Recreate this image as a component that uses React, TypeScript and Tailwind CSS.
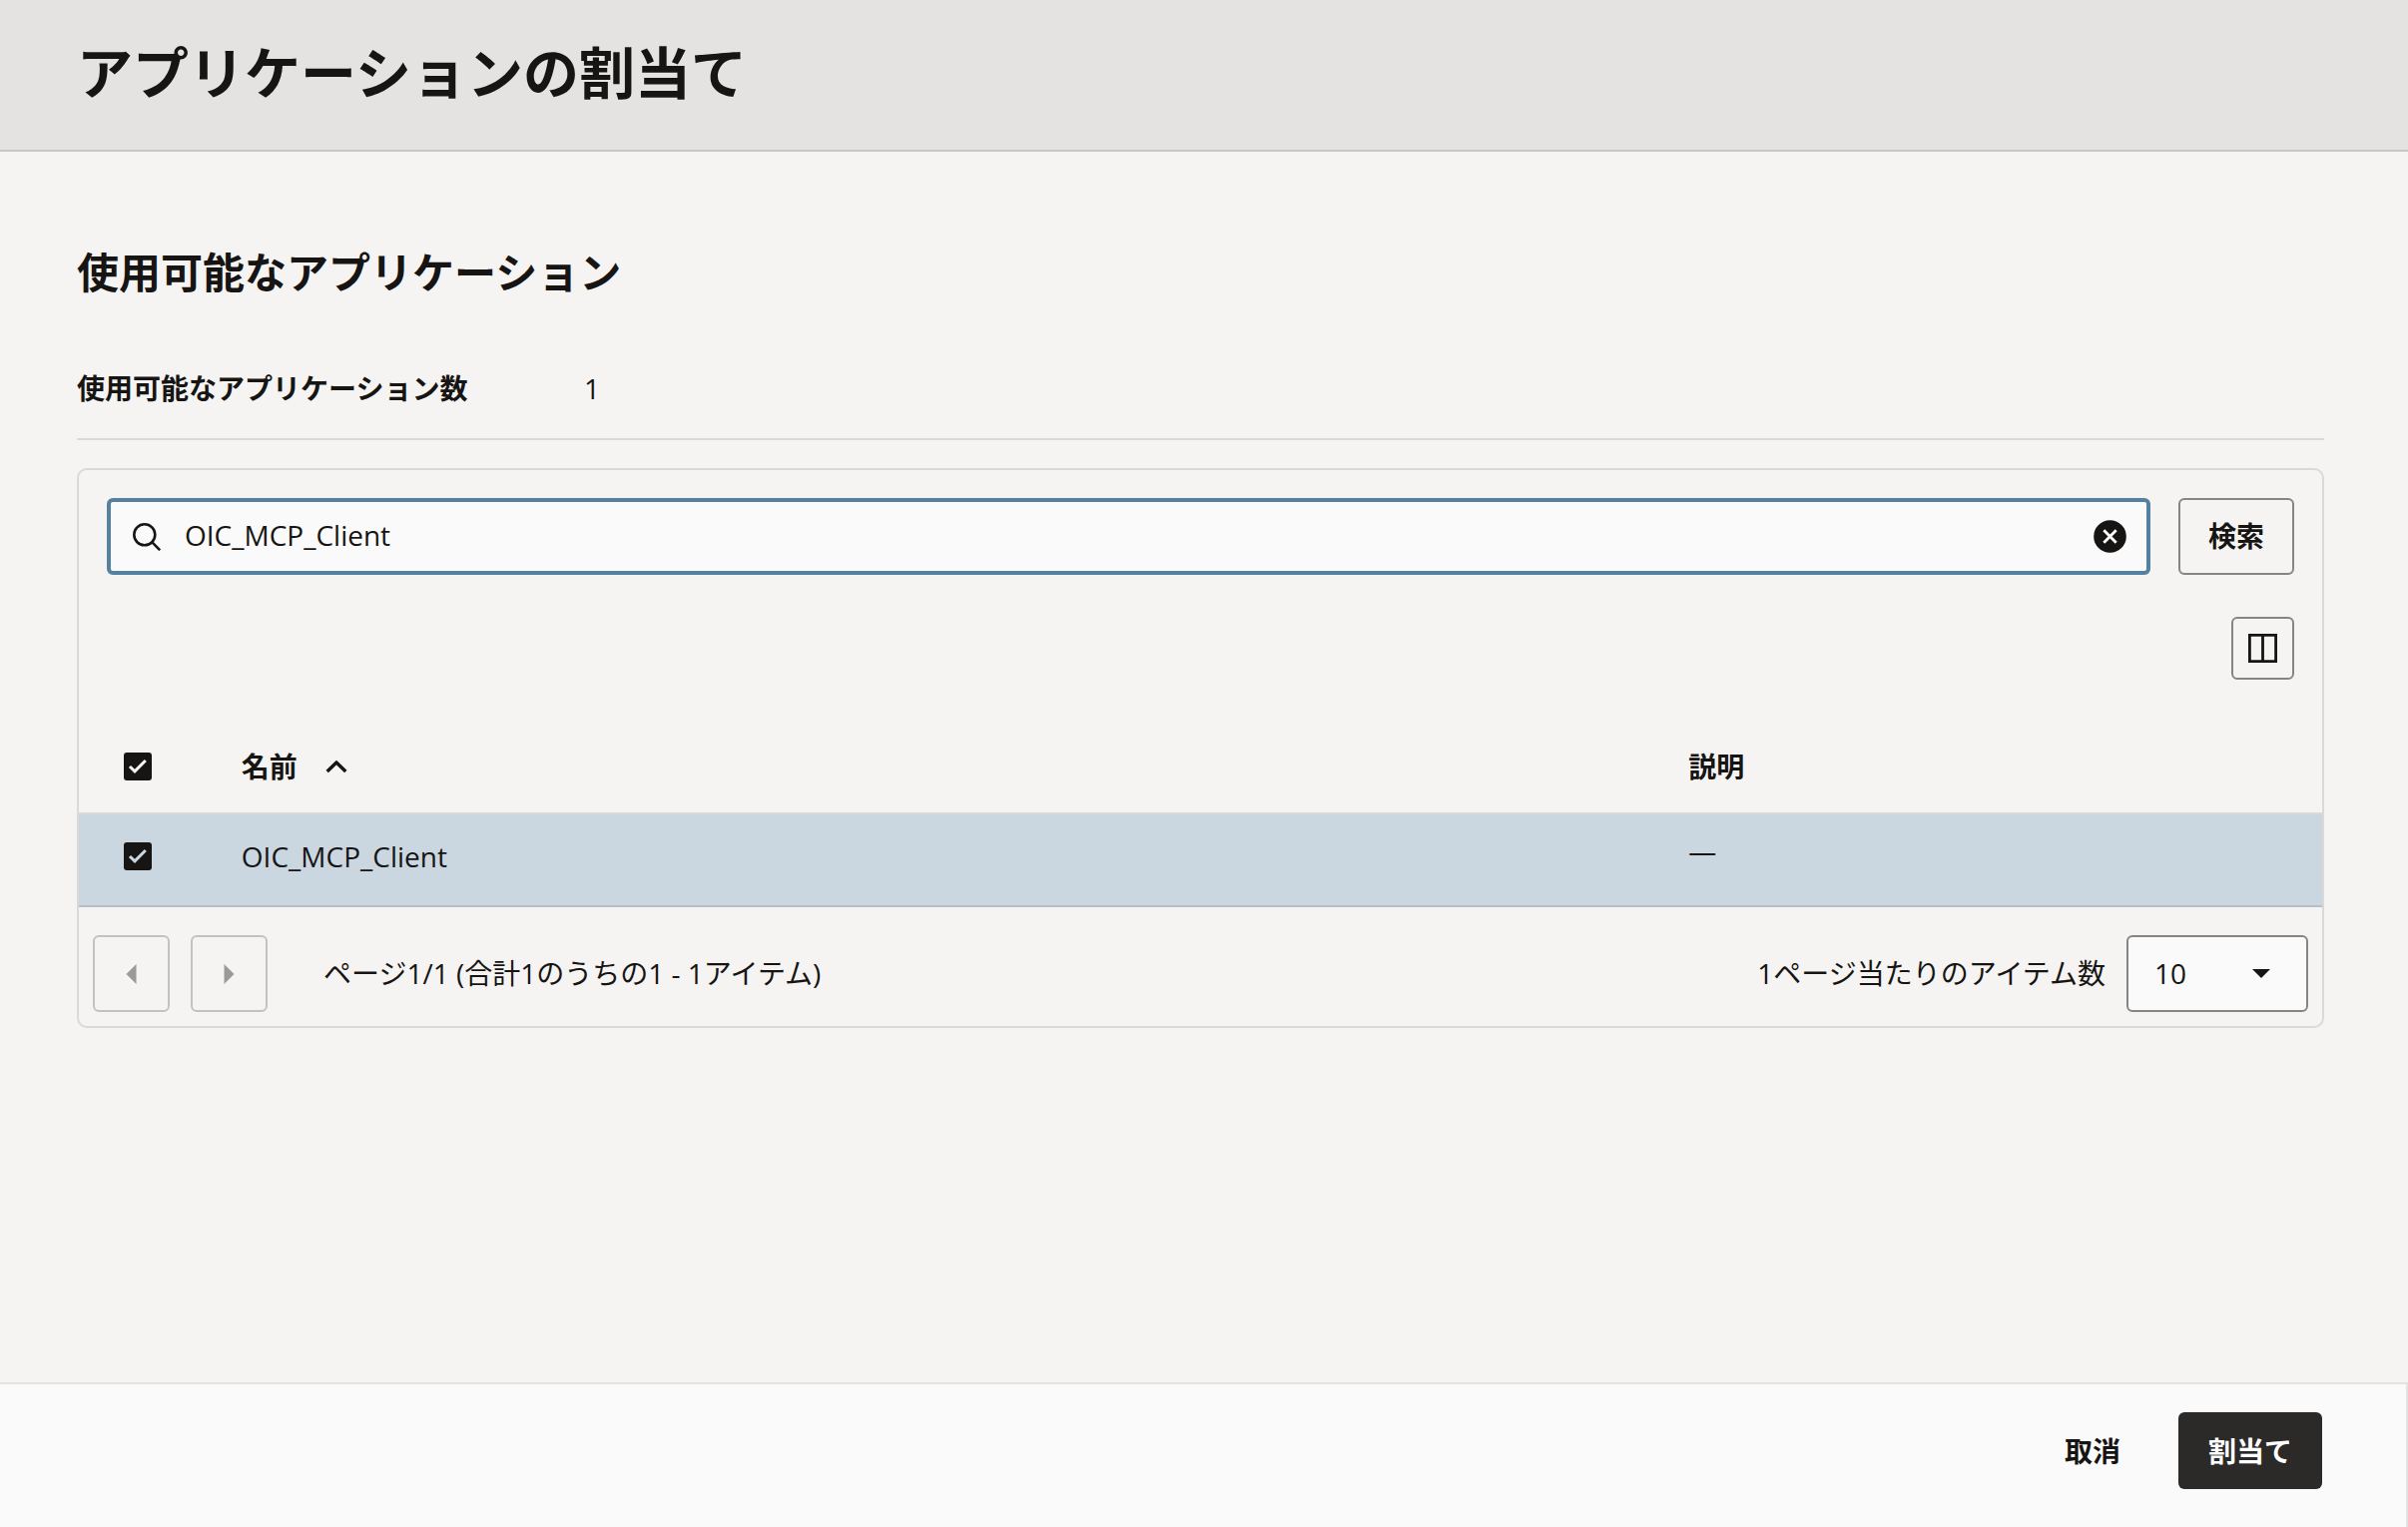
import React, { useState } from 'react';

const CheckBox: React.FC<{ label: string }> = ({ label }) => (
    <span className="grid size-7">
        <input
            type="checkbox"
            defaultChecked
            aria-label={label}
            className="peer col-start-1 row-start-1 size-7 appearance-none rounded-[3px] border-2 border-[#161513] checked:bg-[#161513]"
        />
        <svg viewBox="0 0 28 28" className="pointer-events-none col-start-1 row-start-1 size-7 opacity-0 peer-checked:opacity-100" fill="none" stroke="currentColor" strokeWidth="3">
            <path d="M6 14l5 4.8L21.8 8" />
        </svg>
    </span>
);

const PagerButton: React.FC<{ label: string; path: string }> = ({ label, path }) => (
    <button
        type="button"
        disabled
        aria-label={label}
        className="flex size-[77px] items-center justify-center rounded-md border-2 border-[#c3c2c0] text-[#9b9a98]"
    >
        <svg viewBox="0 0 28 28" className="size-7" fill="currentColor">
            <path d={path} />
        </svg>
    </button>
);

const applications = [{ name: 'OIC_MCP_Client', description: '—' }];

const App: React.FC = () => {
    const [query, setQuery] = useState('OIC_MCP_Client');

    return (
        <div
            lang="ja"
            className="flex min-h-screen flex-col bg-[#f5f4f2] font-['Open_Sans','Noto_Sans_CJK_JP',sans-serif] text-[28px] leading-[42px] text-[#161513]"
        >
            <header className="border-b-2 border-[#c9c7c5] bg-[#e4e3e1] pt-[30px] pr-[84px] pb-9 pl-[77px]">
                <h1 className="text-[56px] leading-[84px] font-bold">アプリケーションの割当て</h1>
            </header>

            <main className="flex-1 pt-[93px] pr-[84px] pb-14 pl-[77px]">
                <h2 className="text-[42px] leading-[56px] font-bold">使用可能なアプリケーション</h2>
                <dl className="mt-[67px] flex border-b-2 border-[#dad9d7] pb-[29px]">
                    <dt className="w-[508px] font-bold">使用可能なアプリケーション数</dt>
                    <dd>1</dd>
                </dl>

                <section className="mt-7 rounded-[10px] border-2 border-[#dad9d7]">
                    <form className="flex gap-7 px-7 pt-7" onSubmit={(e) => e.preventDefault()}>
                        <div className="flex h-[77px] flex-1 items-center rounded-md border-4 border-[#5581a0] bg-[#fbfafa] pr-5 pl-[22px]">
                            <svg viewBox="0 0 28 28" className="size-7" fill="none" stroke="currentColor" strokeWidth="2.6">
                                <circle cx="11.8" cy="11.8" r="10.5" />
                                <path d="M19.2 19.2l8 8" />
                            </svg>
                            <input
                                type="text"
                                aria-label="検索"
                                value={query}
                                onChange={(e) => setQuery(e.target.value)}
                                className="ml-6 min-w-0 flex-1 bg-transparent pb-[3px] outline-none"
                            />
                            <button type="button" aria-label="クリア" onClick={() => setQuery('')}>
                                <svg viewBox="0 0 33 33" className="size-[33px]">
                                    <circle cx="16.5" cy="16.5" r="16.3" fill="#161513" />
                                    <path d="M10.3 10.3l12.4 12.4M22.7 10.3L10.3 22.7" stroke="#fff" strokeWidth="2.8" />
                                </svg>
                            </button>
                        </div>
                        <button type="submit" className="h-[77px] rounded-md border-2 border-[#868583] px-7 pb-[2px] font-bold">
                            検索
                        </button>
                    </form>

                    <div className="mt-[42px] flex justify-end px-7">
                        <button type="button" aria-label="列の管理" className="flex size-[63px] items-center justify-center rounded-md border-2 border-[#868583]">
                            <svg viewBox="0 0 29 29" className="size-[29px]" fill="none" stroke="currentColor" strokeWidth="2.8">
                                <path d="M1.4 1.4h26.2v26.2H1.4zM14.5 1.4v26.2" />
                            </svg>
                        </button>
                    </div>

                    <table className="mt-10 w-full table-fixed border-collapse text-left">
                        <colgroup>
                            <col className="w-[6%]" />
                            <col className="w-[64.5%]" />
                            <col />
                        </colgroup>
                        <thead>
                            <tr className="h-[94px] border-b-2 border-[#dad9d7]">
                                <th className="pl-[45px]">
                                    <span className="text-[#f5f4f2]"><CheckBox label="すべて選択" /></span>
                                </th>
                                <th className="px-7 font-bold">
                                    <span className="flex items-center gap-7">
                                        名前
                                        <svg viewBox="0 0 22 14" className="h-[14px] w-[22px]" fill="none" stroke="currentColor" strokeWidth="3.4">
                                            <path d="M1.7 12l9.3-9 9.3 9" />
                                        </svg>
                                    </span>
                                </th>
                                <th className="px-7 font-bold">説明</th>
                            </tr>
                        </thead>
                        <tbody>
                            {applications.map((app) => (
                                <tr key={app.name} className="h-[93px] border-b-2 border-[#b3bfca] bg-[#cbd7e0]">
                                    <td className="pb-2 pl-[45px]">
                                        <span className="text-[#cbd7e0]"><CheckBox label={app.name} /></span>
                                    </td>
                                    <td className="px-7 pb-2">{app.name}</td>
                                    <td className="px-7 pb-5">{app.description}</td>
                                </tr>
                            ))}
                        </tbody>
                    </table>

                    <div className="flex items-center px-[14px] pt-7 pb-[14px]">
                        <div className="flex gap-[21px]">
                            <PagerButton label="前のページ" path="M18.5 4v20l-10-10z" />
                            <PagerButton label="次のページ" path="M8.5 4v20l10-10z" />
                        </div>
                        <p className="ml-14 pb-[2px]">ページ1/1 (合計1のうちの1 - 1アイテム)</p>
                        <label htmlFor="page-size" className="mr-[21px] ml-auto pb-[2px]">1ページ当たりのアイテム数</label>
                        <div className="grid w-[182px] items-center">
                            <select
                                id="page-size"
                                defaultValue="10"
                                className="col-start-1 row-start-1 h-[77px] appearance-none rounded-md border-2 border-[#868583] bg-[#fbfafa] pb-[2px] pl-[26px]"
                            >
                                <option>10</option>
                                <option>25</option>
                                <option>50</option>
                            </select>
                            <svg viewBox="0 0 18 9" className="pointer-events-none col-start-1 row-start-1 mr-[38px] h-[9px] w-[18px] justify-self-end" fill="currentColor">
                                <path d="M0 0h18L9 9z" />
                            </svg>
                        </div>
                    </div>
                </section>
            </main>

            <footer className="flex justify-end gap-7 border-t-2 border-r-2 border-[#e4e3e1] bg-[#fbfafa] pt-7 pr-[84px] pb-[38px]">
                <button type="button" className="h-[77px] px-[30px] font-bold">取消</button>
                <button type="button" className="h-[77px] rounded-md bg-[#2c2a28] px-[30px] font-bold text-white">割当て</button>
            </footer>
        </div>
    );
};

export default App;
